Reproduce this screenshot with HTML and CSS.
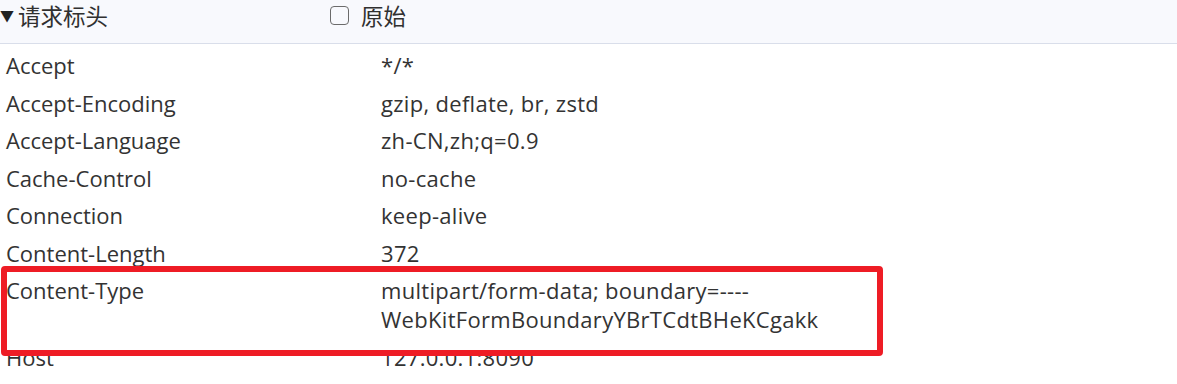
FILE: index.html
```html
<!DOCTYPE html>
<html lang="zh-CN">
<head>
<meta charset="utf-8">
<title>请求标头</title>
<link rel="stylesheet" href="styles.css">
</head>
<body>
<div class="panel">
  <div class="section-header">
    <div class="title"><span class="arrow">▼</span>请求标头</div>
    <label class="raw"><span class="checkbox"></span><span class="raw-label">原始</span></label>
  </div>
  <div class="headers">
    <div class="row"><div class="name">Accept</div><div class="value">*/*</div></div>
    <div class="row"><div class="name">Accept-Encoding</div><div class="value">gzip, deflate, br, zstd</div></div>
    <div class="row"><div class="name">Accept-Language</div><div class="value">zh-CN,zh;q=0.9</div></div>
    <div class="row"><div class="name">Cache-Control</div><div class="value">no-cache</div></div>
    <div class="row"><div class="name">Connection</div><div class="value">keep-alive</div></div>
    <div class="row"><div class="name">Content-Length</div><div class="value">372</div></div>
    <div class="row"><div class="name">Content-Type</div><div class="value">multipart/form-data; boundary=----WebKitFormBoundaryYBrTCdtBHeKCgakk</div></div>
    <div class="row"><div class="name">Host</div><div class="value">127.0.0.1:8090</div></div>
  </div>
  <div class="highlight"></div>
</div>
</body>
</html>
```
FILE: styles.css
```css
html, body {
  margin: 0;
  padding: 0;
  background: #ffffff;
}
body {
  width: 1177px;
  height: 384px;
  overflow: hidden;
  font-family: "Open Sans", "Noto Sans CJK SC", sans-serif;
  color: #333333;
}
.panel {
  position: relative;
}
.section-header {
  height: 43px;
  display: flex;
  align-items: center;
  background: #f8f9fd;
  border-bottom: 1px solid #d9deea;
  font-family: "Noto Sans CJK SC", sans-serif;
  font-size: 22.5px;
  color: #303030;
}
.title {
  width: 330px;
  display: flex;
  align-items: center;
  margin-top: -13px;
}
.arrow {
  font-size: 14px;
  width: 18px;
  color: #222;
}
.raw {
  display: flex;
  align-items: center;
  margin-top: -13px;
}
.checkbox {
  width: 17px;
  height: 17px;
  border: 1.5px solid #6b6b6b;
  border-radius: 4px;
  margin-right: 12px;
}
.headers {
  padding-top: 3px;
}
.row {
  display: grid;
  grid-template-columns: 375px 1fr;
  padding: 4px 0 4.5px 6px;
  font-size: 22px;
  line-height: 29px;
}
.value {
  padding-right: 300px;
  letter-spacing: 0.3px;
}
.highlight {
  position: absolute;
  left: 1px;
  top: 266px;
  width: 870px;
  height: 78px;
  border: 6px solid #ee1c25;
  border-radius: 4px;
}
```
